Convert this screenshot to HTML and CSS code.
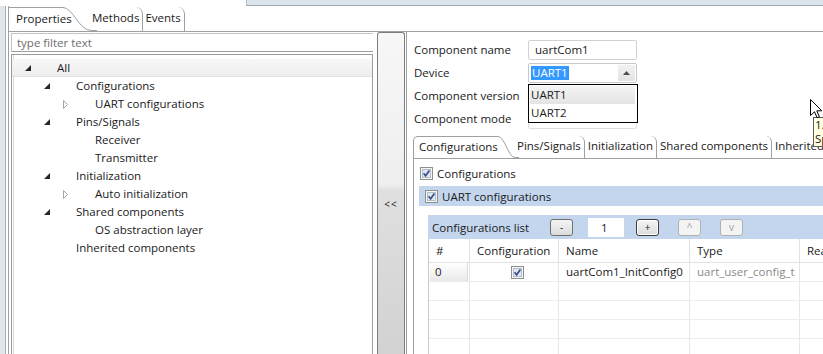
FILE: index.html
```html
<!DOCTYPE html>
<html>
<head>
<meta charset="utf-8">
<link rel="stylesheet" href="styles.css">
</head>
<body>
<div class="screen">
  <div class="topstrip"><div class="topstrip-gap"></div><div class="topstrip-box"></div></div>
  <div class="main">
    <div class="leftedge"></div>
    <div class="folder">
      <div class="tabbar">
        <div class="tab active">
          <span class="tab-text">Properties</span>
          <svg class="curve" width="36" height="24" viewBox="0 0 36 24"><path d="M0 0.5 H2 C12 0.5 18 23.5 30 23.5 H36" fill="none" stroke="#a0a0a0"/></svg>
        </div>
        <div class="tab plain">Methods</div>
        <div class="tab plain">Events</div>
      </div>
      <div class="body">
        <div class="leftpane">
          <div class="filter">type filter text</div>
          <div class="tree">
            <div class="row l0 sel"><span class="arr"><svg width="6" height="6" viewBox="0 0 6 6"><polygon points="6,0 6,6 0,6" fill="#262626"/></svg></span>All</div>
            <div class="row l1"><span class="arr"><svg width="6" height="6" viewBox="0 0 6 6"><polygon points="6,0 6,6 0,6" fill="#262626"/></svg></span>Configurations</div>
            <div class="row l2"><span class="arr"><svg width="6" height="9" viewBox="0 0 6 9"><polygon points="0.5,0.5 4.5,4.5 0.5,8.5" fill="none" stroke="#a6a6a6"/></svg></span>UART configurations</div>
            <div class="row l1"><span class="arr"><svg width="6" height="6" viewBox="0 0 6 6"><polygon points="6,0 6,6 0,6" fill="#262626"/></svg></span>Pins/Signals</div>
            <div class="row l2"><span class="arr"></span>Receiver</div>
            <div class="row l2"><span class="arr"></span>Transmitter</div>
            <div class="row l1"><span class="arr"><svg width="6" height="6" viewBox="0 0 6 6"><polygon points="6,0 6,6 0,6" fill="#262626"/></svg></span>Initialization</div>
            <div class="row l2"><span class="arr"><svg width="6" height="9" viewBox="0 0 6 9"><polygon points="0.5,0.5 4.5,4.5 0.5,8.5" fill="none" stroke="#a6a6a6"/></svg></span>Auto initialization</div>
            <div class="row l1"><span class="arr"><svg width="6" height="6" viewBox="0 0 6 6"><polygon points="6,0 6,6 0,6" fill="#262626"/></svg></span>Shared components</div>
            <div class="row l2"><span class="arr"></span>OS abstraction layer</div>
            <div class="row l1"><span class="arr"></span>Inherited components</div>
          </div>
        </div>
        <div class="splitter"><span class="split-label">&lt;&lt;</span></div>
        <div class="rightpane">
          <div class="form">
            <div class="lbl">Component name</div>
            <div class="field text">uartCom1</div>
            <div class="lbl">Device</div>
            <div class="field combo">
              <span class="selected">UART1</span>
              <span class="combo-btn"><svg width="7" height="4" viewBox="0 0 7 4"><polygon points="0,4 3.5,0 7,4" fill="#4d4d4d"/></svg></span>
              <div class="dropdown">
                <div class="dd-item hover">UART1</div>
                <div class="dd-item">UART2</div>
              </div>
            </div>
            <div class="lbl">Component version</div>
            <div class="field ghost"></div>
            <div class="lbl">Component mode</div>
            <div class="field ghost"></div>
          </div>
          <div class="inner">
            <div class="itabbar">
              <div class="itab active">
                <span class="itab-text">Configurations</span>
                <svg class="icurve" width="22" height="22" viewBox="0 0 22 22"><path d="M0 0.5 H1 C8 0.5 11 21.5 18 21.5 H22" fill="none" stroke="#a0a0a0"/></svg>
              </div>
              <div class="itab plain">Pins/Signals</div>
              <div class="itab plain">Initialization</div>
              <div class="itab plain">Shared components</div>
              <div class="itab plain last">Inherited components</div>
            </div>
            <div class="ibody">
              <div class="cbrow">
                <svg class="cb" width="13" height="13" viewBox="0 0 13 13"><rect x="0.5" y="0.5" width="12" height="12" fill="#f6f6f6" stroke="#8e8f8f"/><rect x="2.5" y="2.5" width="8" height="8" fill="#e2e8ef" stroke="#b3bdc9"/><path d="M3.6 6.3 L5.6 8.8 L9.4 3.4" fill="none" stroke="#3a4f8e" stroke-width="1.7"/></svg>
                <span>Configurations</span>
              </div>
              <div class="bluebar">
                <svg class="cb" width="13" height="13" viewBox="0 0 13 13"><rect x="0.5" y="0.5" width="12" height="12" fill="#f6f6f6" stroke="#8e8f8f"/><rect x="2.5" y="2.5" width="8" height="8" fill="#e2e8ef" stroke="#b3bdc9"/><path d="M3.6 6.3 L5.6 8.8 L9.4 3.4" fill="none" stroke="#3a4f8e" stroke-width="1.7"/></svg>
                <span>UART configurations</span>
              </div>
              <div class="group">
                <div class="listbar">
                  <span class="list-title">Configurations list</span>
                  <span class="btn">-</span>
                  <span class="num">1</span>
                  <span class="btn focus">+</span>
                  <span class="btn dis">^</span>
                  <span class="btn dis">v</span>
                </div>
                <div class="table">
                  <div class="th">#</div>
                  <div class="th">Configuration</div>
                  <div class="th">Name</div>
                  <div class="th">Type</div>
                  <div class="th">Rea</div>

                  <div class="td idx"><span class="idxbtn">0</span></div>
                  <div class="td center"><svg width="13" height="13" viewBox="0 0 13 13"><rect x="0.5" y="0.5" width="12" height="12" fill="#f6f6f6" stroke="#8e8f8f"/><rect x="2.5" y="2.5" width="8" height="8" fill="#e2e8ef" stroke="#b3bdc9"/><path d="M3.6 6.3 L5.6 8.8 L9.4 3.4" fill="none" stroke="#3a4f8e" stroke-width="1.7"/></svg></div>
                  <div class="td">uartCom1_InitConfig0</div>
                  <div class="td gray">uart_user_config_t</div>
                  <div class="td"></div>

                  <div class="td"></div><div class="td"></div><div class="td"></div><div class="td"></div><div class="td"></div>
                  <div class="td"></div><div class="td"></div><div class="td"></div><div class="td"></div><div class="td"></div>
                  <div class="td"></div><div class="td"></div><div class="td"></div><div class="td"></div><div class="td"></div>
                  <div class="td"></div><div class="td"></div><div class="td"></div><div class="td"></div><div class="td"></div>
                </div>
              </div>
            </div>
          </div>
        </div>
      </div>
    </div>
  </div>
</div>
<svg class="cursor" width="13" height="20" viewBox="0 0 13 20"><path d="M0.5 0.5 L0.5 16.5 L4.5 12.8 L7.2 18.8 L9.4 17.8 L6.8 11.8 L11.8 11.8 Z" fill="#fff" stroke="#000"/></svg>
<div class="tooltip"><div>1.</div><div>Sp</div></div>
</body>
</html>
```

FILE: styles.css
```css
* { box-sizing: border-box; }
html, body { margin: 0; padding: 0; }
body {
  width: 823px;
  height: 354px;
  overflow: hidden;
  background: #fff;
  position: relative;
  font-family: "Open Sans", "Noto Sans", sans-serif;
  font-size: 11.5px;
  color: #1a1a1a;
}
.screen { display: flex; flex-direction: column; height: 354px; }

.topstrip { height: 6px; display: flex; flex: none; }
.topstrip-gap { width: 246px; }
.topstrip-box { flex: 1; background: #dce4ee; border-left: 1px solid #b4bdc8; border-bottom: 1px solid #9ea6b0; }

.main { flex: 1; display: flex; min-height: 0; }
.leftedge { width: 6px; flex: none; background: #e1e6ed; border-right: 1px solid #a7adb4; }
.folder { flex: 1; display: flex; flex-direction: column; margin-left: 2px; min-width: 0; border-left: 1px solid #a0a0a0; }

.tabbar { height: 26px; flex: none; display: flex; align-items: flex-end; border-bottom: 1px solid #a0a0a0; }
.tab { height: 24px; line-height: 22px; white-space: nowrap; }
.tab.active { display: flex; align-items: flex-start; }
.tab-text { display: block; width: 52px; height: 24px; padding-left: 7px; border-top: 1px solid #a0a0a0; overflow: visible; }
.curve { display: block; margin-left: 0; flex: none; }
.tab.plain { padding: 0 3px 0 2px; border-right: 1px solid #a0a0a0; border-top-right-radius: 7px; margin-left: -7px; }
.tab.plain + .tab.plain { margin-left: 0; }

.body { flex: 1; display: flex; min-height: 0; }
.leftpane { width: 366px; flex: none; display: flex; flex-direction: column; padding: 1px 2px 0 2px; }
.filter { height: 19px; line-height: 17px; border-top: 1px solid #c4c4c4; border-bottom: 1px solid #9c9c9c; border-left: 1px solid #c4c4c4; padding-left: 5px; color: #6d6d6d; }
.tree { flex: 1; margin-top: 2px; border: 1px solid #9c9c9c; border-bottom: none; padding-top: 4px; box-shadow: inset 1px 0 0 #fff, inset 2px 0 0 #d8d8d8; }
.row { height: 18px; line-height: 18px; display: flex; align-items: center; white-space: nowrap; }
.row.sel { background: linear-gradient(#f7f7f7, #eeeeee); border-bottom: 1px solid #e2e2e2; }
.row.l0 { padding-left: 13px; }
.row.l1 { padding-left: 32px; }
.row.l2 { padding-left: 51px; }
.arr { width: 32px; flex: none; display: flex; align-items: center; height: 18px; }
.arr svg { display: block; }

.splitter {
  width: 28px; flex: none; margin-left: 2px;
  border: 1px solid #7c7c7c; border-bottom: none;
  border-radius: 3px 3px 0 0;
  background: linear-gradient(#f7f7f7 0%, #efefef 47%, #e0e0e0 49%, #d2d2d2 100%);
  display: flex; justify-content: center;
  padding-top: 164px;
  font-size: 10px; color: #222; letter-spacing: 1px;
}
.split-label { line-height: 14px; }

.rightpane { flex: 1; min-width: 0; margin-left: 1px; border-left: 1px solid #a0a0a0; box-shadow: inset 1px 0 0 #fff; padding-left: 6px; display: flex; flex-direction: column; }

.form { display: grid; grid-template-columns: 115px 109px; grid-auto-rows: 20px; row-gap: 3px; margin-top: 8px; }
.lbl { line-height: 20px; padding-left: 1px; white-space: nowrap; }
.field { border: 1px solid #d2d2d2; border-radius: 2px; position: relative; }
.field.text { padding-left: 6px; line-height: 18px; }
.field.combo { display: flex; align-items: center; padding-left: 2px; background: #fff; border-color: #c8c8c8; }
.selected { background: #3399ff; color: #fff; line-height: 14px; padding: 0 1px; }
.combo-btn { margin-left: auto; margin-right: 1px; width: 17px; height: 16px; background: linear-gradient(#f2f2f2, #e2e2e2); display: flex; align-items: center; justify-content: center; }
.combo-btn svg { display: block; }
.field.ghost { border-color: #e0e0e0; }
.dropdown {
  position: absolute; left: -1px; top: 20px; width: 110px; height: 39px;
  background: #fff; border: 1px solid #000; z-index: 2; padding: 1px 2px 0 1px;
}
.dd-item { height: 18px; line-height: 18px; padding-left: 1px; }
.dd-item.hover { background: linear-gradient(#f4f4f4, #e4e4e4); }

.inner { margin-top: 8px; display: flex; flex-direction: column; flex: 1; min-height: 0; }
.itabbar { height: 22px; display: flex; align-items: flex-end; border-bottom: 1px solid #a0a0a0; flex: none; }
.itab { height: 22px; line-height: 20px; white-space: nowrap; }
.itab.active { display: flex; }
.itab-text { display: block; width: 84px; padding-left: 5px; border-top: 1px solid #a0a0a0; border-left: 1px solid #a0a0a0; border-top-left-radius: 5px; }
.icurve { display: block; flex: none; }
.itab.plain { padding: 0 3px 0 3px; border-right: 1px solid #a0a0a0; border-top-right-radius: 6px; }
.itab.active + .itab.plain { margin-left: -5px; }
.ibody { flex: 1; border-left: 1px solid #a0a0a0; padding-left: 6px; }

.cbrow { display: flex; align-items: center; height: 16px; margin-top: 6px; }
.cb { display: block; flex: none; margin-right: 4px; }
.bluebar { margin-top: 5px; margin-left: -1px; height: 20px; background: #c3d6ed; display: flex; align-items: center; padding-left: 6px; }

.group { margin-left: 8px; margin-top: 9px; }
.listbar { height: 24px; background: #c3d6ed; display: flex; align-items: center; padding-left: 4px; }
.list-title { width: 118px; flex: none; }
.btn {
  width: 23px; height: 17px; border: 1px solid #707070; border-radius: 3px;
  background: linear-gradient(#f4f4f4, #dcdcdc); display: flex; align-items: center; justify-content: center;
  font-size: 10px; color: #222; flex: none;
}
.btn.focus { border-color: #3c3c3c; box-shadow: inset 0 0 0 1px #fff; }
.btn.dis { border-color: #adb2b5; background: #f4f4f4; color: #9a9a9a; margin-left: 19px; }
.num { width: 36px; height: 19px; background: #fff; margin: 0 12px 0 15px; padding-left: 13px; line-height: 19px; flex: none; }

.table { display: grid; grid-template-columns: 41px 89px 131px 110px 120px; grid-template-rows: 24px repeat(5, 19px); border-left: 1px solid #c8c8c8; }
.th { line-height: 23px; padding-left: 7px; border-bottom: 1px solid #e2e2e2; border-right: 1px solid #e2e2e2; white-space: nowrap; }
.td { line-height: 18px; padding-left: 7px; border-bottom: 1px solid #ececec; border-right: 1px solid #e6e6e6; white-space: nowrap; }
.td.idx { padding: 0 1px 0 1px; }
.idxbtn { display: block; height: 18px; padding-left: 5px; background: linear-gradient(#ffffff, #e9e9e9); border-right: 1px solid #dcdcdc; }
.td.center { display: flex; align-items: center; justify-content: center; padding-left: 6px; }
.td.gray { color: #8a8a8a; }

.cursor { position: absolute; left: 810px; top: 99px; z-index: 5; }
.tooltip {
  position: absolute; left: 813px; top: 117px; width: 40px; height: 30px;
  background: #ffffe1; border: 1px solid #5a5a5a; z-index: 4;
  padding-left: 1px; line-height: 14px; font-size: 11.5px;
}
```
